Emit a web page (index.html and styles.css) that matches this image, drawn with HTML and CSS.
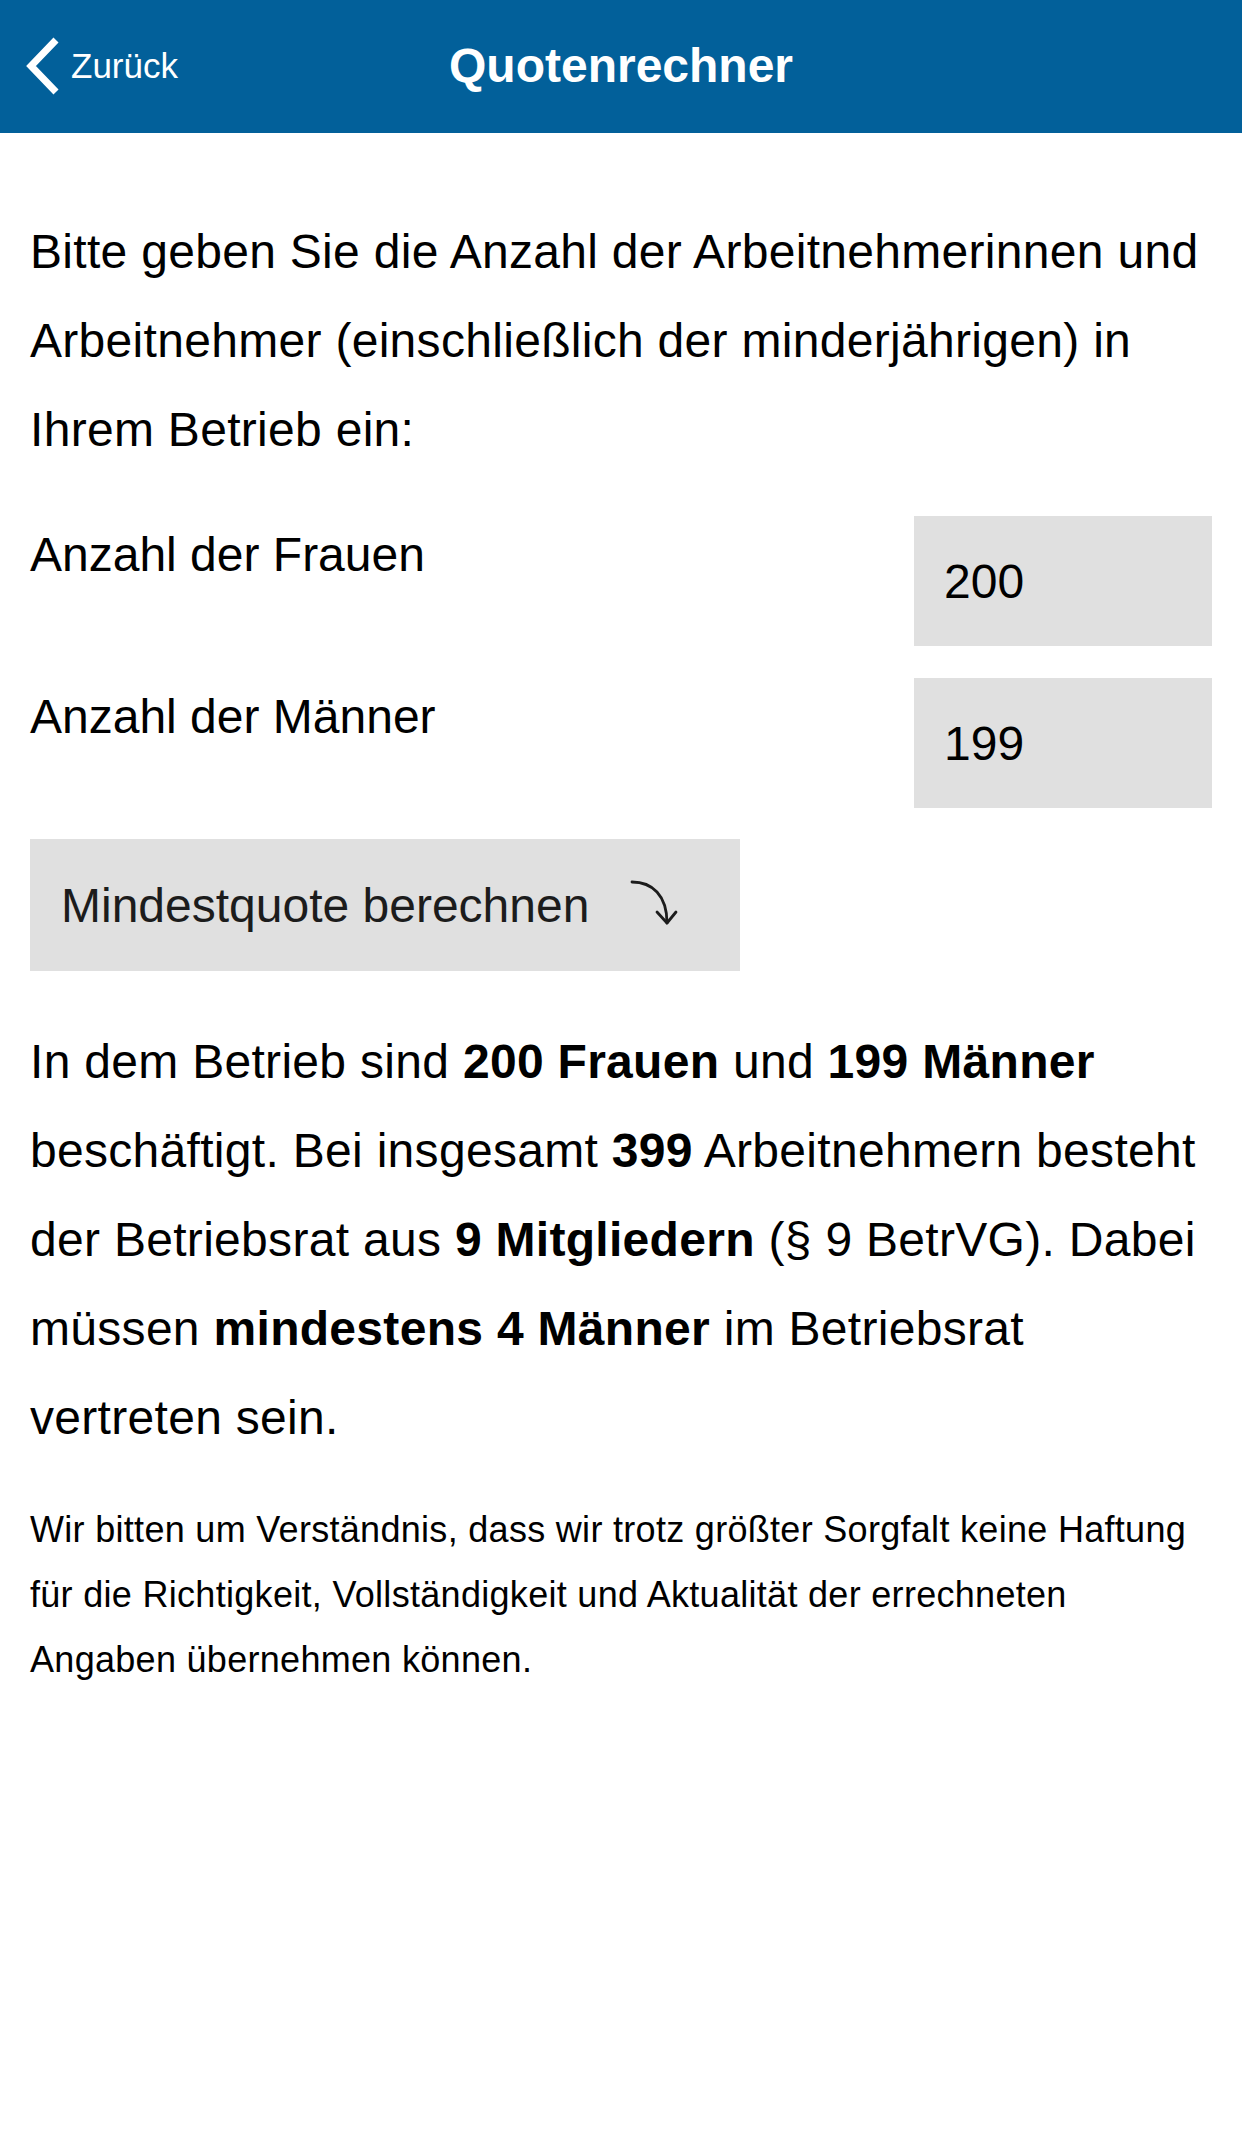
FILE: index.html
```html
<!DOCTYPE html>
<html lang="de">
<head>
<meta charset="utf-8">
<title>Quotenrechner</title>
<link rel="stylesheet" href="styles.css">
</head>
<body>
<header class="navbar">
  <a class="back" href="#">
    <svg class="back-icon" width="38" height="60" viewBox="0 0 38 60" aria-hidden="true">
      <polyline points="33,4 8,30 33,56" fill="none" stroke="#ffffff" stroke-width="7" stroke-linejoin="miter" stroke-linecap="butt"/>
    </svg>
    <span class="back-label">Zurück</span>
  </a>
  <h1 class="title">Quotenrechner</h1>
  <div class="nav-spacer"></div>
</header>

<main class="content">
  <p class="intro">Bitte geben Sie die Anzahl der Arbeitnehmerinnen und Arbeitnehmer (einschließlich der minderjährigen) in Ihrem Betrieb ein:</p>

  <div class="field-row">
    <label class="field-label" for="frauen">Anzahl der Frauen</label>
    <input class="field-input" id="frauen" type="text" value="200">
  </div>
  <div class="field-row">
    <label class="field-label" for="maenner">Anzahl der Männer</label>
    <input class="field-input" id="maenner" type="text" value="199">
  </div>

  <button class="calc-button" type="button">
    <span class="calc-label">Mindestquote berechnen</span>
    <svg class="calc-icon" width="48" height="46" viewBox="0 0 48 46" aria-hidden="true">
      <path d="M2 2 C 22 2, 37 15, 37 43" fill="none" stroke="#1c1c1c" stroke-width="2.8" stroke-linecap="round"/>
      <path d="M27 32 L37 43 L46 32" fill="none" stroke="#1c1c1c" stroke-width="2.8" stroke-linecap="round" stroke-linejoin="round"/>
    </svg>
  </button>

  <p class="result">In dem Betrieb sind <strong>200 Frauen</strong> und <strong>199 Männer</strong> beschäftigt. Bei insgesamt <strong>399</strong> Arbeitnehmern besteht der Betriebsrat aus <strong>9 Mitgliedern</strong> (§ 9 BetrVG). Dabei müssen <strong>mindestens 4 Männer</strong> im Betriebsrat vertreten sein.</p>

  <p class="disclaimer">Wir bitten um Verständnis, dass wir trotz größter Sorgfalt keine Haftung für die Richtigkeit, Vollständigkeit und Aktualität der errechneten Angaben übernehmen können.</p>
</main>
</body>
</html>
```

FILE: styles.css
```css
* {
  box-sizing: border-box;
}

html, body {
  margin: 0;
  padding: 0;
  background: #ffffff;
}

body {
  font-family: "Liberation Sans", Arial, Helvetica, sans-serif;
  color: #000000;
  width: 1242px;
  min-height: 2148px;
}

.navbar {
  height: 133px;
  background: #02609a;
  display: grid;
  grid-template-columns: 1fr auto 1fr;
  align-items: center;
  color: #ffffff;
}

.back {
  display: flex;
  align-items: center;
  padding-left: 23px;
  color: #ffffff;
  text-decoration: none;
}

.back-icon {
  display: block;
  margin-top: -2px;
}

.back-label {
  font-size: 35px;
  margin-left: 10px;
  margin-top: -2px;
}

.title {
  margin: 0;
  font-size: 48px;
  font-weight: bold;
  color: #ffffff;
  padding-bottom: 2px;
}

.content {
  padding: 74px 30px 0 30px;
}

.intro {
  margin: 0;
  font-size: 48px;
  line-height: 89px;
  letter-spacing: 0.3px;
}

.field-row {
  display: flex;
  justify-content: space-between;
  align-items: flex-start;
}

.field-row:first-of-type {
  margin-top: 42px;
}

.field-row + .field-row {
  margin-top: 32px;
}

.field-label {
  font-size: 48px;
  line-height: 78px;
}

.field-input {
  width: 298px;
  height: 130px;
  border: none;
  outline: none;
  border-radius: 0;
  background: #e0e0e0;
  font-family: "Liberation Sans", Arial, Helvetica, sans-serif;
  font-size: 48px;
  color: #000000;
  padding: 0 30px;
  margin: 0;
}

.calc-button {
  display: flex;
  align-items: center;
  width: 710px;
  height: 132px;
  margin-top: 31px;
  padding: 0 0 0 31px;
  border: none;
  border-radius: 0;
  background: #e0e0e0;
  font-family: "Liberation Sans", Arial, Helvetica, sans-serif;
  font-size: 48px;
  color: #1c1c1c;
  cursor: pointer;
}

.calc-icon {
  display: block;
  margin-left: 41px;
  margin-top: -4px;
}

.result {
  margin: 46px 0 0 0;
  font-size: 48px;
  line-height: 89px;
  letter-spacing: 0.3px;
}

.result strong {
  font-weight: bold;
}

.disclaimer {
  margin: 35px 0 0 0;
  font-size: 36px;
  line-height: 65px;
  letter-spacing: 0.3px;
}
```
